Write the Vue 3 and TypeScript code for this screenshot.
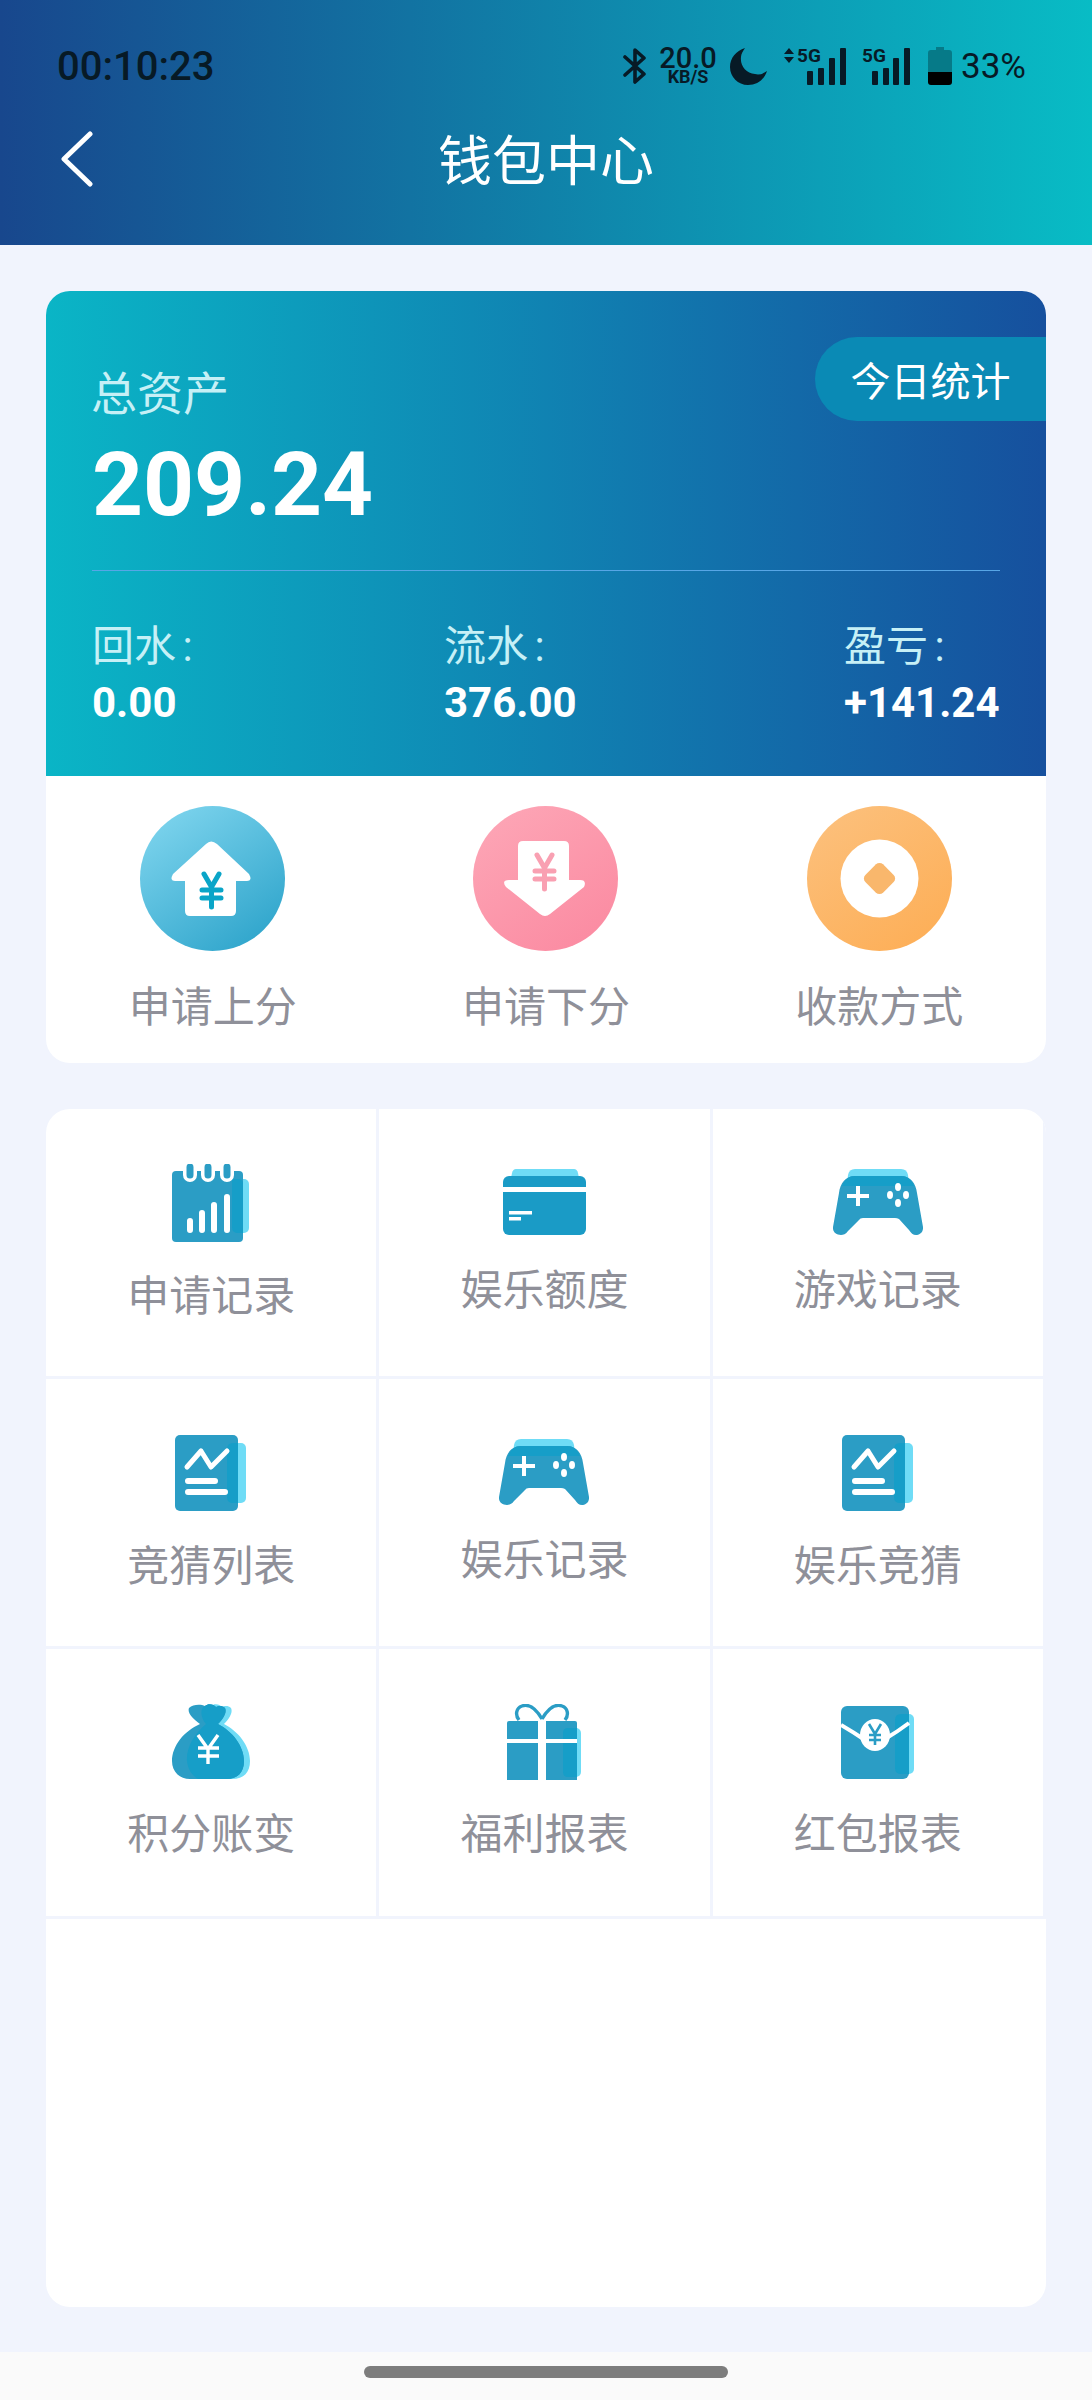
<script setup lang="ts">
const stats = [
  { label: '回水 :', value: '0.00' },
  { label: '流水 :', value: '376.00' },
  { label: '盈亏 :', value: '+141.24' },
]

const actions = [
  { name: '申请上分', icon: 'up' },
  { name: '申请下分', icon: 'down' },
  { name: '收款方式', icon: 'coin' },
]

// size picks the icon box, the icons are not all the same height
const menus = [
  { name: '申请记录', icon: 'calendar', size: 'tall' },
  { name: '娱乐额度', icon: 'card', size: 'short' },
  { name: '游戏记录', icon: 'pad', size: 'short' },
  { name: '竞猜列表', icon: 'doc', size: 'tall' },
  { name: '娱乐记录', icon: 'pad', size: 'short' },
  { name: '娱乐竞猜', icon: 'doc', size: 'tall' },
  { name: '积分账变', icon: 'bag', size: 'mid' },
  { name: '福利报表', icon: 'gift', size: 'mid' },
  { name: '红包报表', icon: 'envelope', size: 'mid' },
]
</script>

<template>
  <div class="page">
    <header class="header">
      <div class="status">
        <span class="time">00:10:23</span>
        <div class="status-icons">
          <svg class="ic-bt" width="24" height="36" viewBox="0 0 24 36">
            <path d="M2 9 L21 26 L12 34 V2 L21 10 L2 27" fill="none" stroke="#071a26" stroke-width="3.6" stroke-linejoin="round" stroke-linecap="round" />
          </svg>
          <div class="speed">
            <span class="speed-num">20.0</span>
            <span class="speed-unit">KB/S</span>
          </div>
          <svg class="ic-moon" width="37" height="37" viewBox="0 0 37 37">
            <path d="M15 0 C6 3 0 10 0 19 C0 29 8 37 18 37 C27 37 34 32 37 23 C33 26 29 27 25 26 C16 25 10 18 11 9 C11 6 13 3 15 0 Z" fill="#071a26" />
          </svg>
          <div class="sig sig-one">
            <span class="sig-text">5G</span>
            <svg width="62" height="37" viewBox="0 0 62 37">
              <path d="M5 0 L10 6 H0 Z M5 15 L10 9 H0 Z" fill="#071a26" />
              <rect x="23" y="23" width="6" height="14" rx="1" fill="#071a26" />
              <rect x="34" y="20" width="6" height="17" rx="1" fill="#071a26" />
              <rect x="45" y="10" width="6" height="27" rx="1" fill="#071a26" />
              <rect x="56" y="0" width="6" height="37" rx="1" fill="#071a26" />
            </svg>
          </div>
          <div class="sig sig-two">
            <span class="sig-text">5G</span>
            <svg width="48" height="37" viewBox="0 0 48 37">
              <rect x="10" y="23" width="6" height="14" rx="1" fill="#071a26" />
              <rect x="21" y="20" width="6" height="17" rx="1" fill="#071a26" />
              <rect x="31" y="10" width="6" height="27" rx="1" fill="#071a26" />
              <rect x="42" y="0" width="6" height="37" rx="1" fill="#071a26" />
            </svg>
          </div>
          <svg class="ic-bat" width="24" height="38" viewBox="0 0 24 38">
            <path d="M8 0 H16 V3 H21 Q24 3 24 6 V25 H0 V6 Q0 3 3 3 H8 Z" fill="#067a88" />
            <path d="M0 25 H24 V35 Q24 38 21 38 H3 Q0 38 0 35 Z" fill="#000" />
          </svg>
          <span class="battery-num">33%</span>
        </div>
      </div>
      <div class="nav">
        <svg class="back" width="34" height="56" viewBox="0 0 34 56">
          <path d="M30 3 L4 28 L30 53" fill="none" stroke="#fff" stroke-width="5" stroke-linecap="round" stroke-linejoin="round" />
        </svg>
        <span class="title">钱包中心</span>
      </div>
    </header>

    <main class="main">
      <section class="wallet">
        <div class="hero">
          <div class="today">今日统计</div>
          <div class="hero-label">总资产</div>
          <div class="hero-amount">209.24</div>
          <div class="hero-line"></div>
          <div class="stats">
            <div v-for="s in stats" :key="s.label" class="stat">
              <div class="stat-label">{{ s.label }}</div>
              <div class="stat-value">{{ s.value }}</div>
            </div>
          </div>
        </div>
        <div class="actions">
          <div v-for="a in actions" :key="a.name" class="action">
            <svg v-if="a.icon === 'up'" width="145" height="145" viewBox="0 0 145 145">
              <defs>
                <linearGradient id="gUp" x1="0.15" y1="0" x2="0.85" y2="1">
                  <stop offset="0" stop-color="#7fd5ee" />
                  <stop offset="1" stop-color="#2ca3ca" />
                </linearGradient>
              </defs>
              <circle cx="72.5" cy="72.5" r="72.5" fill="url(#gUp)" />
              <path d="M66 38 Q71 33 77 38 L109 68 Q113 75 107 75 H96 V105 Q96 110 91 110 H50 Q45 110 45 105 V75 H35 Q29 75 33 68 Z" fill="#fff" />
              <path d="M64 68 L71.5 81 L79 68 M71.5 81 V101 M62 84 H81 M62 92 H81" fill="none" stroke="#0aa5c8" stroke-width="5" stroke-linecap="round" stroke-linejoin="round" />
            </svg>
            <svg v-else-if="a.icon === 'down'" width="145" height="145" viewBox="0 0 145 145">
              <defs>
                <linearGradient id="gDown" x1="0.15" y1="0" x2="0.85" y2="1">
                  <stop offset="0" stop-color="#fda6b6" />
                  <stop offset="1" stop-color="#fb8aa1" />
                </linearGradient>
              </defs>
              <circle cx="72.5" cy="72.5" r="72.5" fill="url(#gDown)" />
              <path d="M50 35 H91 Q96 35 96 40 V74 H107 Q114 74 111 81 L77 108 Q72 112 67 108 L33 81 Q28 74 36 74 H45 V40 Q45 35 50 35 Z" fill="#fff" />
              <path d="M64 49 L71.5 62 L79 49 M71.5 62 V83 M62 65 H81 M62 73 H81" fill="none" stroke="#f9a0b2" stroke-width="5" stroke-linecap="round" stroke-linejoin="round" />
            </svg>
            <svg v-else width="145" height="145" viewBox="0 0 145 145">
              <defs>
                <linearGradient id="gCoin" x1="0.15" y1="0" x2="0.85" y2="1">
                  <stop offset="0" stop-color="#fcc07c" />
                  <stop offset="1" stop-color="#fdae56" />
                </linearGradient>
              </defs>
              <circle cx="72.5" cy="72.5" r="72.5" fill="url(#gCoin)" />
              <circle cx="72.5" cy="72.5" r="39" fill="#fff" />
              <rect x="60" y="60" width="25" height="25" rx="5" fill="#f9b76c" transform="rotate(45 72.5 72.5)" />
            </svg>
            <div class="action-name">{{ a.name }}</div>
          </div>
        </div>
      </section>

      <section class="menu">
        <div class="menu-grid">
          <div v-for="m in menus" :key="m.name" class="cell" :class="m.size">
            <div class="cell-icon">
              <svg v-if="m.icon === 'calendar'" width="78" height="78" viewBox="0 0 78 78">
                <rect x="60" y="15" width="17" height="54" rx="5" fill="#6fdcf6" />
                <rect x="0" y="7" width="71" height="71" rx="4" fill="#2b9dc5" />
                <path d="M60 15 H66 Q71 15 71 20 V69 H66 Q60 69 60 63 Z" fill="#169ec8" />
                <path d="M18 7 V11 M36 7 V11 M55 7 V11" stroke="#fff" stroke-width="14" stroke-linecap="round" />
                <path d="M18 3 V11 M36 3 V11 M55 3 V11" stroke="#2b9dc5" stroke-width="7" stroke-linecap="round" />
                <path d="M18 57 V66 M30 49 V66 M42 41 V66 M55 33 V66" stroke="#fff" stroke-width="6" stroke-linecap="round" />
              </svg>
              <svg v-else-if="m.icon === 'card'" width="83" height="66" viewBox="0 0 83 66">
                <path d="M13 0 H71 Q74 0 75 4 L76 9 H8 L9 4 Q10 0 13 0 Z" fill="#6fdcf6" />
                <rect x="0" y="7" width="83" height="59" rx="6" fill="#1a9bc6" />
                <rect x="0" y="18" width="83" height="5" fill="#fff" />
                <rect x="6" y="42" width="23" height="3.5" fill="#fff" />
                <rect x="6" y="48" width="12" height="3.5" fill="#fff" />
              </svg>
              <svg v-else-if="m.icon === 'pad'" width="90" height="66" viewBox="0 0 90 66">
                <path d="M22 0 H68 Q74 0 75 6 L76 14 H14 L15 6 Q16 0 22 0 Z" fill="#6fdcf6" />
                <path d="M22 7 H68 C77 7 83 14 84 24 L90 58 C90.5 64 86 66 83 66 C80 66 78 64 76 61 L66 50 Q64 49 62 49 H30 Q27 49 26 51 L15 62 C13 65 10 66 8 66 C3 66 -0.5 63 0 58 L6 24 C7 14 13 7 22 7 Z" fill="#2b9dc5" />
                <path d="M22 7 H68 C74 7 78 10 81 17 H9 C12 10 16 7 22 7 Z" fill="#169ec8" />
                <path d="M14 27 H36 M25 17 V37" stroke="#fff" stroke-width="4" />
                <ellipse cx="65" cy="18" rx="3" ry="4" fill="#fff" />
                <ellipse cx="65" cy="34" rx="3" ry="4" fill="#fff" />
                <ellipse cx="57" cy="26" rx="3" ry="4" fill="#fff" />
                <ellipse cx="73" cy="26" rx="3" ry="4" fill="#fff" />
              </svg>
              <svg v-else-if="m.icon === 'doc'" width="72" height="78" viewBox="0 0 72 78">
                <rect x="52" y="9" width="19" height="60" rx="5" fill="#6fdcf6" />
                <rect x="0" y="1" width="63" height="76" rx="5" fill="#2b9dc5" />
                <path d="M58 9 Q52 9 52 15 V63 Q52 69 58 69 H63 V9 Z" fill="#169ec8" />
                <path d="M12 33 L26 17 L36 33 L52 17" fill="none" stroke="#fff" stroke-width="5" stroke-linecap="round" stroke-linejoin="round" />
                <path d="M13 47 H40 M13 58 H50" stroke="#fff" stroke-width="6" stroke-linecap="round" />
              </svg>
              <svg v-else-if="m.icon === 'bag'" width="78" height="76" viewBox="0 0 78 76">
                <path d="M34 20 C18 27 6 42 6 57 C6 68 14 75 24 75 H60 C72 75 78 68 78 57 C78 42 66 27 52 20 C58 14 61 8 59 4 C56 1 52 2 50 3 C48 0 42 -1 39 2 Z" fill="#6fdcf6" />
                <path d="M28 20 C12 27 0 42 0 57 C0 68 8 75 18 75 H54 C66 75 72 68 72 57 C72 42 60 27 46 20 C52 14 55 8 53 4 C50 1 46 2 44 3 C42 0 36 -1 33 2 C29 0 21 0 17 4 C15 9 21 15 28 20 Z" fill="#2b9dc5" />
                <path d="M34 20 C22 30 14 44 15 57 C16 66 20 71 26 75 H54 C66 75 72 68 72 57 C72 42 60 27 46 20 C52 14 55 8 53 4 C50 1 46 2 44 3 C42 0 36 -1 33 2 C28 4 28 13 34 20 Z" fill="#169ec8" />
                <path d="M26 31 L36 45 L46 31 M36 45 V60 M26 44 H47 M26 52 H47" fill="none" stroke="#fff" stroke-width="3.4" />
              </svg>
              <svg v-else-if="m.icon === 'gift'" width="74" height="76" viewBox="0 0 74 76">
                <rect x="56" y="24" width="18" height="49" rx="5" fill="#6fdcf6" />
                <path d="M35 15 C28 3 21 0 15 2 C9 4 8 11 12 16 M35 15 C42 3 49 0 55 2 C61 4 62 11 58 16" fill="none" stroke="#2b9dc5" stroke-width="3.4" />
                <path d="M2 17 H68 Q70 17 70 19 V76 H0 V19 Q0 17 2 17 Z" fill="#2b9dc5" />
                <path d="M61 24 Q56 24 56 29 V68 Q56 73 61 73 H70 V24 Z" fill="#169ec8" />
                <rect x="31" y="17" width="8" height="59" fill="#fff" />
                <rect x="0" y="35" width="70" height="4" fill="#fff" />
              </svg>
              <svg v-else width="73" height="76" viewBox="0 0 73 76">
                <rect x="54" y="10" width="19" height="60" rx="5" fill="#6fdcf6" />
                <rect x="0" y="2" width="68" height="73" rx="6" fill="#2b9dc5" />
                <path d="M60 10 Q54 10 54 16 V64 Q54 70 60 70 H68 V10 Z" fill="#169ec8" />
                <path d="M0 21 Q12 28 24 36 M68 19 Q56 28 44 35" fill="none" stroke="#fff" stroke-width="4" />
                <ellipse cx="34" cy="31" rx="15" ry="16" fill="#fff" />
                <path d="M28 20 L34 30 L40 20 M34 30 V41 M28 31 H40 M28 36 H40" fill="none" stroke="#2b9dc5" stroke-width="2.6" />
              </svg>
            </div>
            <div class="cell-name">{{ m.name }}</div>
          </div>
        </div>
      </section>
    </main>

    <footer class="home-bar">
      <div class="handle"></div>
    </footer>
  </div>
</template>

<style>
html,
body {
  margin: 0;
  background: #f1f4fd;
}
</style>

<style scoped>
.page {
  width: 1092px;
  height: 2400px;
  display: flex;
  flex-direction: column;
  overflow: hidden;
  background: #f1f4fd;
  font-family: Roboto, "Noto Sans CJK SC", sans-serif;
}

.header {
  height: 245px;
  flex-shrink: 0;
  box-sizing: border-box;
  padding-top: 46px;
  background: linear-gradient(90deg, #18478d 0%, #08bcc5 100%);
}
.status {
  height: 40px;
  display: flex;
  align-items: center;
  justify-content: space-between;
  padding: 0 66px 0 57px;
}
.time {
  font-size: 40px;
  font-weight: 500;
  color: #071a26;
}
.status-icons {
  display: flex;
  align-items: center;
  height: 40px;
  color: #071a26;
}
.status-icons svg {
  display: block;
  flex-shrink: 0;
}
.speed {
  display: flex;
  flex-direction: column;
  align-items: center;
  width: 58px;
  margin-left: 12px;
  margin-bottom: 2px;
}
.speed-num {
  font-size: 29px;
  font-weight: 500;
  line-height: 23px;
}
.speed-unit {
  font-size: 18px;
  font-weight: 700;
  line-height: 14px;
}
.ic-moon {
  margin-left: 13px;
}
.sig {
  position: relative;
}
.sig-one {
  margin-left: 17px;
}
.sig-two {
  margin-left: 16px;
}
.ic-bat {
  margin-left: 18px;
}
.sig-text {
  position: absolute;
  top: 0;
  font-size: 19px;
  font-weight: 700;
  line-height: 16px;
  color: #071a26;
}
.sig-one .sig-text {
  left: 13px;
}
.sig-two .sig-text {
  left: 0;
}
.battery-num {
  font-size: 35px;
  margin-left: 9px;
}
.nav {
  position: relative;
  height: 56px;
  margin-top: 45px;
  display: flex;
  align-items: center;
  justify-content: center;
}
.back {
  position: absolute;
  left: 60px;
  top: 0;
}
.title {
  font-size: 54px;
  line-height: 56px;
  padding-top: 8px;
  color: #fff;
}

.main {
  flex: 1;
  min-height: 0;
  box-sizing: border-box;
  padding: 46px 46px 45px;
  display: flex;
  flex-direction: column;
  gap: 46px;
}

.wallet {
  background: #fff;
  border-radius: 24px;
  overflow: hidden;
}
.hero {
  position: relative;
  height: 485px;
  box-sizing: border-box;
  padding: 78px 46px 0;
  background: linear-gradient(90deg, #0ab5c6 0%, #16509e 100%);
  color: #fff;
}
.today {
  position: absolute;
  top: 46px;
  right: 0;
  width: 231px;
  height: 84px;
  border-radius: 42px 0 0 42px;
  background: #0a8ab5;
  display: flex;
  align-items: center;
  justify-content: center;
  font-size: 40px;
}
.hero-label {
  font-size: 46px;
  line-height: 50px;
  margin-left: -1px;
  color: #c6f0f6;
}
.hero-amount {
  margin-top: 21px;
  font-size: 89px;
  line-height: 90px;
  font-weight: 700;
}
.hero-line {
  margin-top: 40px;
  height: 1px;
  background: #57a6e6;
}
.stats {
  margin-top: 51px;
  display: grid;
  grid-template-columns: 352px 400px 156px;
}
.stat-label {
  font-size: 42px;
  line-height: 50px;
  word-spacing: -4px;
  color: #c6f0f6;
}
.stat-value {
  margin-top: 6px;
  font-size: 42px;
  line-height: 50px;
  font-weight: 700;
}

.actions {
  height: 287px;
  display: grid;
  grid-template-columns: repeat(3, 1fr);
  padding-top: 30px;
  box-sizing: border-box;
}
.action {
  display: flex;
  flex-direction: column;
  align-items: center;
}
.action svg {
  display: block;
}
.action-name {
  margin-top: 32px;
  font-size: 42px;
  line-height: 50px;
  color: #8f9099;
}

.menu {
  flex: 1;
  min-height: 0;
  background: #fff;
  border-radius: 24px;
  overflow: hidden;
}
.menu-grid {
  display: grid;
  grid-template-columns: repeat(3, 1fr);
  grid-auto-rows: 270px;
}
.cell {
  box-sizing: border-box;
  border-right: 3px solid #f1f4fd;
  border-bottom: 3px solid #f1f4fd;
  display: flex;
  flex-direction: column;
  align-items: center;
  padding-top: 55px;
}
.cell-icon {
  display: flex;
  justify-content: center;
  align-items: flex-start;
}
.cell-icon svg {
  display: block;
}
.tall .cell-icon {
  height: 78px;
}
.mid .cell-icon {
  height: 76px;
}
.short .cell-icon {
  height: 66px;
  margin-top: 5px;
}
.cell-name {
  margin-top: 30px;
  font-size: 42px;
  line-height: 50px;
  color: #8f9099;
}
.short .cell-name {
  margin-top: 31px;
}

.home-bar {
  height: 48px;
  flex-shrink: 0;
  background: #fafafa;
  display: flex;
  justify-content: center;
  padding-top: 14px;
  box-sizing: border-box;
}
.handle {
  width: 364px;
  height: 12px;
  border-radius: 6px;
  background: #7d7d7d;
}
</style>
